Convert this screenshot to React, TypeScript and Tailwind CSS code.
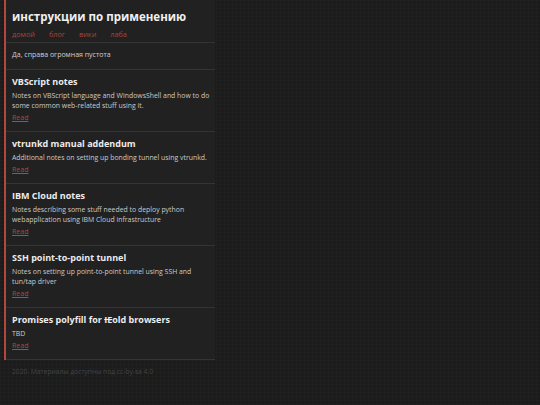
import React from "react";

type Note = { title: React.ReactNode; desc: string[] };

const notes: Note[] = [
  {
    title: "VBScript notes",
    desc: ["Notes on VBScript language and WindowsShell and how to do", "some common web-related stuff using it."],
  },
  { title: "vtrunkd manual addendum", desc: ["Additional notes on setting up bonding tunnel using vtrunkd."] },
  {
    title: "IBM Cloud notes",
    desc: ["Notes describing some stuff needed to deploy python", "webapplication using IBM Cloud infrastructure"],
  },
  {
    title: "SSH point-to-point tunnel",
    desc: ["Notes on setting up point-to-point tunnel using SSH and", "tun/tap driver"],
  },
  {
    title: (
      <>
        Promises polyfill for <span className="line-through">IE</span>old browsers
      </>
    ),
    desc: ["TBD"],
  },
];

const links = ["домой", "блог", "вики", "лаба"];

function NoteItem({ note }: { note: Note }) {
  return (
    <article className="border-b border-[#343434] pt-[5px] pb-[8px] pl-[6px]">
      <h2 className="text-[9px] font-bold leading-[14px] text-[#ececec]">{note.title}</h2>
      <p className="mt-[2px] text-[6.9px] leading-[10px] text-[#cacaca]">
        {note.desc.map((line, i) => (
          <span key={i} className="block">
            {line}
          </span>
        ))}
      </p>
      <a href="#" className="mt-[2px] block text-[7px] leading-[10px] text-[#ab4a40] underline">
        Read
      </a>
    </article>
  );
}

export default function App() {
  return (
    <div
      className="min-h-[405px] w-full bg-[#1b1b1b] bg-[linear-gradient(#202020_1px,transparent_1px),linear-gradient(90deg,#202020_1px,transparent_1px)] bg-[size:4px_4px] pl-[4px]"
      style={{ fontFamily: '"Open Sans", "Noto Sans", sans-serif' }}
    >
      <main className="w-[211px] border-l-2 border-[#b3473c] bg-[#212121]">
        <header className="border-b border-[#343434] pt-[8px] pb-[3px] pl-[6px]">
          <h1 className="text-[11.5px] font-bold leading-[18px] text-[#f0f0f0]">инструкции по применению</h1>
          <nav className="mt-[3px] flex gap-[14px] text-[7.3px] leading-[10px] text-[#a8443a]">
            {links.map((l) => (
              <a key={l} href="#">
                {l}
              </a>
            ))}
          </nav>
        </header>
        <section className="border-b border-[#343434] pt-[7px] pb-[9px] pl-[6px] text-[7px] leading-[10px] text-[#d0d0d0]">
          Да, справа огромная пустота
        </section>
        {notes.map((n, i) => (
          <NoteItem key={i} note={n} />
        ))}
      </main>
      <footer className="pt-[7px] pl-[8px] text-[6.7px] leading-[10px] text-[#434343]">
        2020. Материалы доступны под cc-by-sa 4.0
      </footer>
    </div>
  );
}
